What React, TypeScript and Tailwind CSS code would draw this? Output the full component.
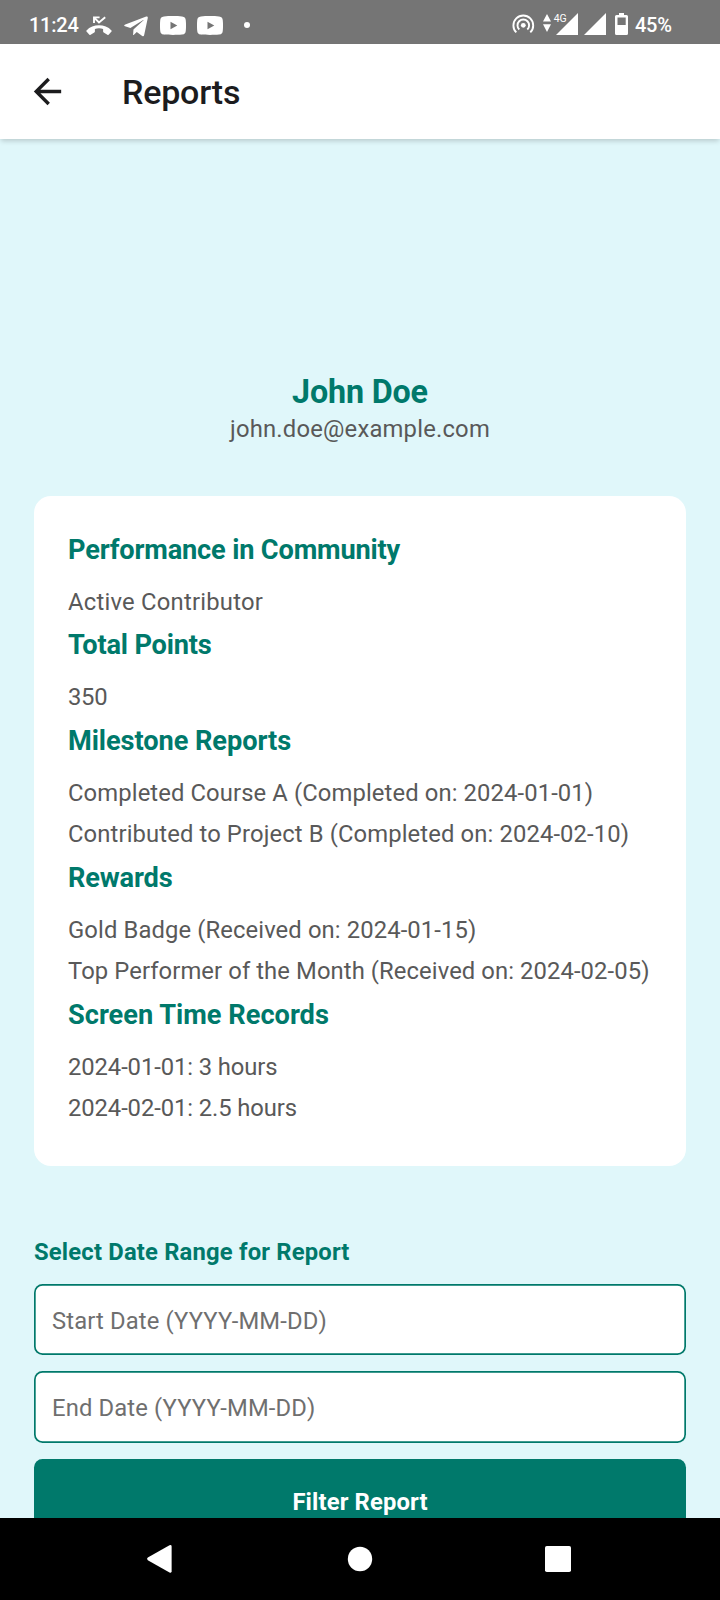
import { FaTelegramPlane } from "react-icons/fa";
import { MdArrowBack } from "react-icons/md";

const sections = [
  {
    title: "Performance in Community",
    titleClass: "tracking-[-0.17px]",
    items: [{ text: "Active Contributor", className: "tracking-[0.23px]" }],
  },
  {
    title: "Total Points",
    titleClass: "tracking-[-0.2px]",
    items: [{ text: "350", className: "tracking-[-0.3px]" }],
  },
  {
    title: "Milestone Reports",
    titleClass: "tracking-[-0.07px]",
    items: [
      { text: "Completed Course A (Completed on: 2024-01-01)", className: "tracking-[0.11px]" },
      { text: "Contributed to Project B (Completed on: 2024-02-10)", className: "tracking-[0.12px]" },
    ],
  },
  {
    title: "Rewards",
    titleClass: "tracking-[-0.15px]",
    items: [
      { text: "Gold Badge (Received on: 2024-01-15)", className: "tracking-[0.11px]" },
      { text: "Top Performer of the Month (Received on: 2024-02-05)", className: "tracking-[0.09px]" },
    ],
  },
  {
    title: "Screen Time Records",
    titleClass: "",
    items: [
      { text: "2024-01-01: 3 hours", className: "tracking-[-0.09px]" },
      { text: "2024-02-01: 2.5 hours", className: "tracking-[-0.09px]" },
    ],
  },
];

function VideoIcon() {
  return (
    <svg width="26" height="19" viewBox="0 0 26 19" fill="currentColor">
      <path
        fillRule="evenodd"
        d="M4 .4C9 0 17 0 22 .4C25 .7 25.6 2 25.8 4.5C26.1 8 26.1 11 25.8 14.5C25.6 17 25 18.3 22 18.6C17 19 9 19 4 18.6C1 18.3 .4 17 .2 14.5C-.1 11-.1 8 .2 4.5C.4 2 1 .7 4 .4ZM10.5 5.8V13.2L17.3 9.5Z"
      />
    </svg>
  );
}

function MissedCallIcon() {
  return (
    <svg className="mt-[16px]" width="26" height="20" viewBox="0 0 26 20" fill="currentColor">
      <path d="M8 7V1.4H13.6M8.4 1.8L13 6.4L19.2 1.2" fill="none" stroke="currentColor" strokeWidth="1.9" />
      <path d="M.5 14.4C7 7.6 19 7.6 25.5 14.4Q26 15 25.5 15.6L22.6 18.7Q22 19.2 21.4 18.8L17.7 16.6Q17.1 16.2 17.1 15.5V12.9C14.5 12.1 11.5 12.1 8.9 12.9V15.5Q8.9 16.2 8.3 16.6L4.6 18.8Q4 19.2 3.4 18.7L.5 15.6Q0 15 .5 14.4Z" />
    </svg>
  );
}

function HotspotIcon() {
  return (
    <svg className="ml-[260px] mt-[11px]" width="26" height="26" viewBox="510 11 26 26" fill="none" stroke="currentColor" strokeWidth="1.9">
      <path d="M516.3 32.4A9.9 9.9 0 1 1 530.3 32.4" />
      <path d="M519.3 29.5A5.8 5.8 0 1 1 527.3 29.5" />
      <circle cx="523.3" cy="25.3" r="2.4" fill="currentColor" stroke="none" />
    </svg>
  );
}

function StatusBar() {
  return (
    <div className="flex h-[44px] shrink-0 items-start bg-[#757575] text-white">
      <span className="ml-[29px] mt-[13px] w-[57px] text-[20px] font-medium leading-[24px] tracking-[-0.25px]">
        11:24
      </span>
      <MissedCallIcon />
      <FaTelegramPlane className="ml-[12px] mt-[12.5px] h-[27px] w-[24px]" />
      <div className="ml-[12px] mt-[16px] flex gap-[11px]">
        <VideoIcon />
        <VideoIcon />
      </div>
      <div className="ml-[21px] mt-[22px] h-[6px] w-[6px] rounded-full bg-white" />
      <HotspotIcon />
      <svg className="ml-[6px] mt-[12px]" width="88" height="24" viewBox="542 12 88 24" fill="currentColor">
        <path d="M547 14L551 21.5H543ZM543 24.3H551L547 32Z" />
        <text x="553.7" y="21.8" fontSize="10.5">4G</text>
        <path d="M556 35L578 13V35ZM584 35L606 13V35Z" />
        <path
          fillRule="evenodd"
          d="M619 13H624V15H626.5Q628 15 628 16.5V33.5Q628 35 626.5 35H616.5Q615 35 615 33.5V16.5Q615 15 616.5 15H619ZM617.5 17.5V25H625.7V17.5Z"
        />
      </svg>
      <span className="ml-[5px] mt-[13px] text-[20px] font-medium leading-[24px] tracking-[-0.3px]">45%</span>
    </div>
  );
}

function DateField({ label, className }: { label: string; className: string }) {
  return (
    <input
      type="text"
      placeholder={label}
      className={`block w-full rounded-[8.5px] bg-white px-[18px] pt-[2px] text-[23.8px] tracking-[0.13px] text-[#555] shadow-[inset_0_0_0_1.7px_#00796b] outline-none placeholder:text-[#6f6f6f] ${className}`}
    />
  );
}

export default function App() {
  return (
    <div className="flex h-[1600px] w-[720px] flex-col overflow-hidden bg-[#e0f7fa] font-['Roboto',sans-serif]">
      <StatusBar />
      <header className="z-10 flex h-[95px] shrink-0 items-center bg-white pl-[27px] text-[#1c1c1e] shadow-[0_3px_5px_-1px_rgba(0,0,0,0.18)]">
        <MdArrowBack className="h-[41px] w-[41px]" />
        <h1 className="ml-[54px] text-[34px] font-medium leading-[40px] tracking-[-0.2px]">Reports</h1>
      </header>

      <main className="min-h-0 flex-1 overflow-hidden px-[34px] pt-[231px]">
        <div className="flex flex-col items-center">
          <h2 className="h-[43px] text-[32.3px] font-bold leading-[44px] tracking-[-0.17px] text-[#00796b]">John Doe</h2>
          <p className="text-[23.8px] leading-[33px] tracking-[0.2px] text-[#595959]">john.doe@example.com</p>
        </div>

        <section className="mt-[50px] h-[670px] rounded-[17px] bg-white px-[34px] pt-[36px]">
          {sections.map((section, index) => (
            <div key={section.title} className={index === 0 ? "" : "pb-px"}>
              <h3 className={`mb-[17px] text-[27.2px] font-bold leading-[37px] text-[#00796b] ${section.titleClass}`}>
                {section.title}
              </h3>
              {section.items.map((item) => (
                <p
                  key={item.text}
                  className={`mb-[8px] whitespace-nowrap text-[23.8px] leading-[33px] text-[#595959] ${item.className}`}
                >
                  {item.text}
                </p>
              ))}
            </div>
          ))}
        </section>

        <section>
          <h4 className="mt-[70px] text-[23.8px] font-bold leading-[33px] tracking-[0.18px] text-[#00796b]">
            Select Date Range for Report
          </h4>
          <DateField label="Start Date (YYYY-MM-DD)" className="mt-[15px] h-[71px]" />
          <DateField label="End Date (YYYY-MM-DD)" className="mt-[16px] h-[72px]" />
          <button className="mt-[16px] flex h-[87px] w-full items-center justify-center rounded-[8.5px] bg-[#00796b] text-[23.8px] font-bold tracking-[0.13px] text-white">
            Filter Report
          </button>
        </section>
      </main>

      <nav className="flex h-[82px] shrink-0 bg-black text-white">
        <svg width="720" height="82" viewBox="0 1518 720 82" fill="currentColor">
          <path d="M147.8 1557.6L169.5 1545.3Q171.6 1544.4 171.6 1546.5V1571.3Q171.6 1573.4 169.5 1572.5L147.8 1560.2Q146.2 1558.9 147.8 1557.6Z" />
          <circle cx="360" cy="1559" r="12.2" />
          <rect x="545" y="1546" width="26" height="26" rx="1.8" />
        </svg>
      </nav>
    </div>
  );
}
